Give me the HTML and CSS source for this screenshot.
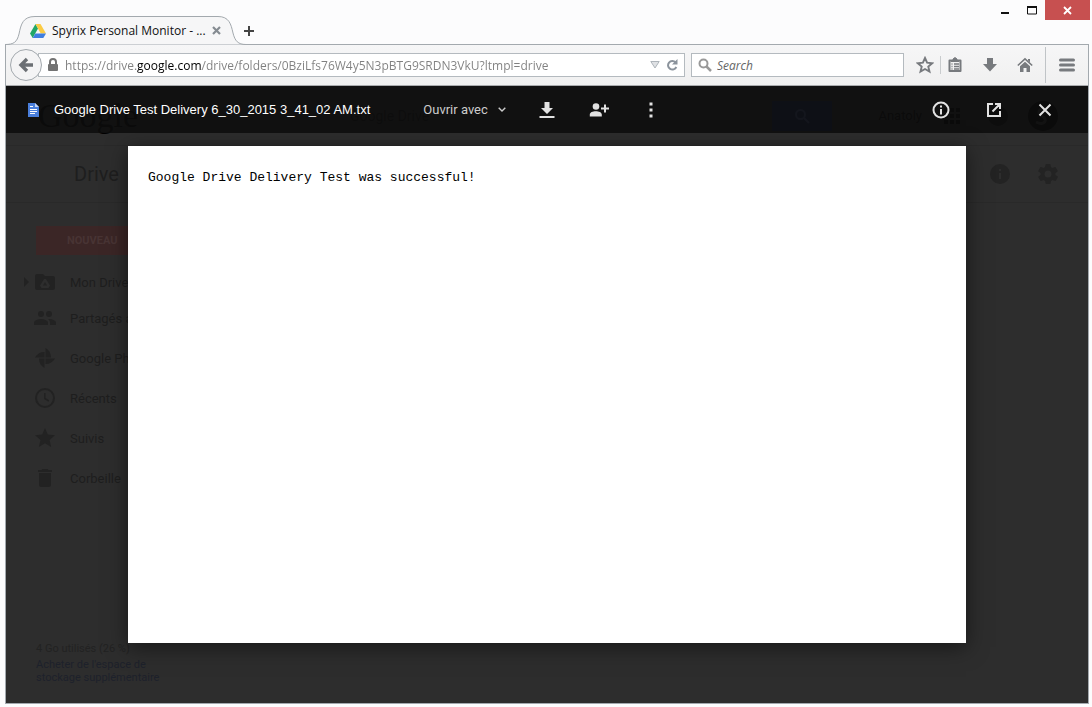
FILE: index.html
```html
<!DOCTYPE html>
<html lang="fr">
<head>
    <meta charset="UTF-8">
    <meta name="viewport" content="width=device-width, initial-scale=1.0">
    <title>Spyrix Personal Monitor - Google Drive</title>
    <link rel="stylesheet" href="styles.css">
</head>
<body>
    <div class="titlebar">
        <div class="tab">
            <svg class="tab-shape" viewBox="0 0 241 29" preserveAspectRatio="none"><path d="M0 28.500C9 28.500 12 26 14 18C16 8 18 .5 30 .5H213C224 .5 226 8 228 17C230 25 233 28.500 241 28.500" fill="#f6f6f7" stroke="#a3a9ae"/></svg>
            <svg class="tab-icon" width="16" height="16" viewBox="0 0 16 16"><path d="M5.500 1L0 10.500 2.700 15 8 5.500z" fill="#21a767"/><path d="M5.500 1h5L16 10.500h-5.300z" fill="#fbcb44"/><path d="M5.300 10.500H16L13.300 15H2.700z" fill="#3f7ee0"/></svg>
            <span class="tab-title">Spyrix Personal Monitor - ...</span>
            <button class="plain" aria-label="Close tab"><svg width="9" height="9" viewBox="0 0 9 9"><path d="M1 1l7 7M8 1L1 8" stroke="#858b91" stroke-width="2.200"/></svg></button>
        </div>
        <button class="plain new-tab" aria-label="New tab"><svg width="12" height="12" viewBox="0 0 12 12"><path d="M6 1v10M1 6h10" stroke="#444" stroke-width="2"/></svg></button>
        <div class="window-buttons">
            <button class="plain" aria-label="Minimize"><svg width="10" height="10" viewBox="0 0 10 10"><path d="M1 8h8" stroke="#111" stroke-width="2"/></svg></button>
            <button class="plain" aria-label="Maximize"><svg width="10" height="10" viewBox="0 0 10 10"><path d="M.5 1v8h9V1" fill="none" stroke="#111"/><path d="M0 2h10" stroke="#111" stroke-width="2"/></svg></button>
            <button class="plain close-window" aria-label="Close"><svg width="9" height="9" viewBox="0 0 9 9"><path d="M1 1l7 7M8 1l-7 7" stroke="#fff" stroke-width="1.800"/></svg></button>
        </div>
    </div>

    <div class="window">
        <div class="navbar">
            <button class="back" aria-label="Back"><svg width="16" height="16" viewBox="0 0 16 16"><path d="M9 2L3 8l6 6M3 8h12" fill="none" stroke="#6b6f74" stroke-width="3.400"/></svg></button>
            <div class="urlbar">
                <svg width="12" height="14" viewBox="0 0 12 14"><path d="M3 7V4a3 3 0 0 1 6 0v3" fill="none" stroke="#737373" stroke-width="2"/><rect x="1" y="6" width="10" height="7" rx="1" fill="#737373"/></svg>
                <input class="url" type="text" aria-label="Address" value="https://drive.google.com/drive/folders/0BziLfs76W4y5N3pBTG9SRDN3VkU?ltmpl=drive">
                <button class="plain" aria-label="History"><svg width="10" height="8" viewBox="0 0 10 8"><path d="M.8.5h8.400L5 7z" fill="#dfe1e4" stroke="#aeb4ba"/></svg></button>
                <button class="plain" aria-label="Reload"><svg width="12" height="12" viewBox="0 0 12 12"><path d="M9.500 3.300A4.300 4.300 0 1 0 10.300 8" fill="none" stroke="#8b939c" stroke-width="2"/><path d="M11.500 0v5.500H6z" fill="#8b939c"/></svg></button>
            </div>
            <div class="searchbar">
                <svg width="14" height="14" viewBox="0 0 14 14"><circle cx="5.500" cy="5.500" r="4" fill="none" stroke="#999" stroke-width="2"/><path d="M8.500 8.500L13 13" stroke="#999" stroke-width="2.500"/></svg>
                <input class="search" type="text" aria-label="Search" placeholder="Search">
            </div>
            <div class="nav-icons">
                <button class="plain bookmark" aria-label="Bookmark"><svg width="18" height="18" viewBox="0 0 18 18"><path d="M9 2l2.100 4.700 5.100.5-3.900 3.400 1.200 5L9 13l-4.500 2.600 1.200-5L1.800 7.200l5.100-.5z" fill="none" stroke="#777a7e" stroke-width="1.900"/></svg></button>
                <button class="plain" aria-label="Bookmarks list"><svg width="16" height="16" viewBox="0 0 16 16"><path d="M2.500 3.500h11v10.500h-11z" fill="#f2f2f3" stroke="#777a7e" stroke-width="2" stroke-linejoin="round"/><path d="M8 .5l2 1.500v2H6V2zM4 4.500h8" fill="#777a7e" stroke="#777a7e"/><path d="M4.500 7h1M7 7h5M4.500 9.500h1M7 9.500h5M4.500 12h1M7 12h5" stroke="#777a7e" stroke-width="1.300"/></svg></button>
                <button class="plain" aria-label="Downloads"><svg width="16" height="16" viewBox="0 0 16 16"><path d="M5 1h6v6h4l-7 7.500L1 7h4z" fill="#777a7e"/></svg></button>
                <button class="plain" aria-label="Home"><svg width="16" height="16" viewBox="0 0 16 16"><path d="M.8 8.500L8 1.800l7.200 6.700" fill="none" stroke="#777a7e" stroke-width="1.600"/><path d="M3 9.200l5-4.500 5 4.500V15H9.500v-4h-3v4H3zM11 2h2v3.500l-2-2z" fill="#777a7e"/></svg></button>
            </div>
            <button class="plain menu" aria-label="Menu"><svg width="16" height="14" viewBox="0 0 16 14"><path d="M1.500 2h13M1.500 7h13M1.500 12h13" stroke="#777a7e" stroke-width="3" stroke-linecap="round"/></svg></button>
        </div>

        <div class="content">
            <!-- dimmed Drive page behind the viewer -->
            <div class="google-bar">
                <span class="google-logo">Google</span>
                <span class="search-hint">Google Drive</span>
                <span class="google-search"><svg width="16" height="16" viewBox="0 0 16 16"><circle cx="6.500" cy="6.500" r="4.500" fill="none" stroke="#3c4a78" stroke-width="2"/><path d="M10 10l5 5" stroke="#3c4a78" stroke-width="2"/></svg></span>
                <span class="user">Anatoly</span>
                <svg class="apps" width="16" height="16" viewBox="0 0 16 16"><path d="M0 2h4m2 0h4m2 0h4M0 8h4m2 0h4m2 0h4M0 14h4m2 0h4m2 0h4" stroke="#000" stroke-width="4"/></svg>
                <svg class="bell" width="20" height="20" viewBox="0 0 20 20"><circle cx="10" cy="10" r="10" fill="#0e0e0e"/></svg>
                <svg class="avatar" width="30" height="30" viewBox="0 0 30 30"><circle cx="15" cy="15" r="15" fill="#000"/><path d="M20 9c-7-4-13 2-6 6s2 10-6 6" fill="none" stroke="#333" stroke-width="3"/></svg>
            </div>
            <div class="drive-bar">
                <span class="drive-title">Drive</span>
                <svg width="24" height="24" viewBox="0 0 24 24"><path d="M12 2a10 10 0 1 0 0 20 10 10 0 0 0 0-20zm1 15h-2v-6h2zm0-8h-2V7h2z" fill="#232323"/></svg>
                <svg width="24" height="24" viewBox="0 0 24 24"><path d="M19.400 13a7.500 7.500 0 0 0 0-2l2.100-1.600a.5.5 0 0 0 .1-.7l-2-3.400a.5.5 0 0 0-.6-.2l-2.500 1a7.300 7.300 0 0 0-1.700-1L14.500 2.400a.5.5 0 0 0-.5-.4h-4a.5.5 0 0 0-.5.4L9.100 5.100a7.700 7.700 0 0 0-1.700 1l-2.500-1a.5.5 0 0 0-.6.2l-2 3.400a.5.5 0 0 0 .1.700L4.600 11a8 8 0 0 0 0 2l-2.100 1.600a.5.5 0 0 0-.1.700l2 3.400c.1.200.4.300.6.200l2.500-1a7.300 7.300 0 0 0 1.700 1l.4 2.700c0 .2.200.4.500.4h4c.2 0 .5-.2.500-.4l.4-2.700a7.700 7.700 0 0 0 1.700-1l2.500 1c.2.100.5 0 .6-.2l2-3.400a.5.500 0 0 0-.1-.7zM12 15.500a3.500 3.500 0 1 1 0-7 3.500 3.500 0 0 1 0 7z" fill="#232323"/></svg>
            </div>
            <div class="sidebar">
                <button class="new-button">NOUVEAU</button>
                <ul class="folders">
                    <li class="my-drive"><svg width="5" height="10" viewBox="0 0 5 10"><path d="M0 0l5 5-5 5z" fill="#222"/></svg><svg width="24" height="24" viewBox="0 0 24 24"><path fill-rule="evenodd" d="M20 6h-8l-2-2H4a2 2 0 0 0-2 2v12c0 1.100.9 2 2 2h16a2 2 0 0 0 2-2V8a2 2 0 0 0-2-2zm-7 3l4 6.500-1.500 2.500h-7L7 15.500 11 9zm-1 3l-2 3.500h4z" fill="#222"/></svg>Mon Drive</li>
                    <li><svg width="24" height="24" viewBox="0 0 24 24"><path d="M16 11a3 3 0 1 0 0-6 3 3 0 0 0 0 6zm-8 0a3 3 0 1 0 0-6 3 3 0 0 0 0 6zm0 2c-2.300 0-7 1.200-7 3.500V19h14v-2.500C15 14.200 10.300 13 8 13zm8 0h-1c1.200.9 2 2 2 3.500V19h6v-2.500c0-2.300-4.700-3.500-7-3.500z" fill="#222"/></svg>Partagés avec moi</li>
                    <li><svg width="24" height="24" viewBox="0 0 24 24"><path d="M12.500 2v9.500H18C18 7 16 4 12.500 2zM22 12.500h-9.500V18c4.500 0 7.500-2 9.500-5.500zM11.500 22v-9.500H6c0 4.500 2 7.500 5.500 9.500zM2 11.500h9.500V6C7 6 4 8 2 11.500z" fill="#222"/></svg>Google Photos</li>
                    <li><svg width="24" height="24" viewBox="0 0 24 24"><circle cx="12" cy="12" r="9" fill="none" stroke="#222" stroke-width="2"/><path d="M11.800 7v5.500l4 2.500" fill="none" stroke="#222" stroke-width="1.500"/></svg>Récents</li>
                    <li><svg width="24" height="24" viewBox="0 0 24 24"><path d="M12 17.300l6.200 3.700-1.600-7L22 9.200l-7.200-.6L12 2 9.200 8.600 2 9.200 7.500 14l-1.700 7z" fill="#222"/></svg>Suivis</li>
                    <li><svg width="24" height="24" viewBox="0 0 24 24"><path d="M6 19c0 1.100.9 2 2 2h8a2 2 0 0 0 2-2V7H6zM19 4h-3.500l-1-1h-5l-1 1H5v2h14z" fill="#222"/></svg>Corbeille</li>
                </ul>
                <div class="storage">
                    <span>4 Go utilisés (26 %)</span>
                    <a href="#">Acheter de l'espace de stockage supplémentaire</a>
                </div>
            </div>

            <div class="viewer">
                <div class="viewer-bar">
                    <svg class="file-icon" width="11" height="14" viewBox="0 0 11 14"><path d="M0 0h7l4 4v10H0z" fill="#4a7fdc"/><path d="M7 0l4 4H7z" fill="#c3d6f7"/><path d="M2 3.500h3M2 6.500h7M2 8.500h7M2 10.500h5" stroke="#fff"/></svg>
                    <span class="file-name">Google Drive Test Delivery 6_30_2015 3_41_02 AM.txt</span>
                    <button class="plain open-with">Ouvrir avec <svg width="8" height="5" viewBox="0 0 8 5"><path d="M.7.700L4 4 7.300.700" fill="none" stroke="#ccc" stroke-width="1.400"/></svg></button>
                    <div class="file-actions">
                        <button class="plain" aria-label="Télécharger"><svg width="16" height="18" viewBox="0 0 16 18"><path d="M5.500 1h5v6H14l-6 6-6-6h3.500zM.5 15h15v2H.5z" fill="#e2e2e2"/></svg></button>
                        <button class="plain" aria-label="Partager"><svg width="20" height="16" viewBox="0 0 20 16"><circle cx="7" cy="4.500" r="3.300" fill="#e2e2e2"/><path d="M.8 14.500v-2c0-4.500 12-4.500 12 0v2zM15 2.500h2v3h3v2h-3v3h-2v-3h-3v-2h3z" fill="#e2e2e2"/></svg></button>
                        <button class="plain" aria-label="Plus d'actions"><svg width="4" height="16" viewBox="0 0 4 16"><path d="M.5.500h3v3h-3zM.5 6.500h3v3h-3zM.5 12.500h3v3h-3z" fill="#e2e2e2"/></svg></button>
                    </div>
                    <div class="viewer-actions">
                        <button class="plain" aria-label="Détails"><svg width="18" height="18" viewBox="0 0 18 18"><circle cx="9" cy="9" r="7.500" fill="none" stroke="#e2e2e2" stroke-width="2"/><path d="M9 4.500v2M9 8v5.500" stroke="#e2e2e2" stroke-width="2"/></svg></button>
                        <button class="plain" aria-label="Nouvelle fenêtre"><svg width="16" height="16" viewBox="0 0 16 16"><path d="M7 2H2v12h12V9M9 2h5v5M14 2L6.500 9.500" fill="none" stroke="#e2e2e2" stroke-width="2"/></svg></button>
                        <button class="plain" aria-label="Fermer"><svg width="14" height="14" viewBox="0 0 14 14"><path d="M1.500 1.500l11 11M12.500 1.500l-11 11" stroke="#e2e2e2" stroke-width="2"/></svg></button>
                    </div>
                </div>
                <pre class="paper">Google Drive Delivery Test was successful!</pre>
            </div>
        </div>
    </div>
</body>
</html>
```

FILE: styles.css
```css
* { box-sizing: border-box; }
body { margin: 0; min-height: 100vh; padding-bottom: 3px; display: flex; flex-direction: column; background: #fcfcfd; font-family: "Open Sans", "Noto Sans", sans-serif; font-size: 12px; color: #111; }
svg { display: block; flex: none; }
input { min-width: 0; flex: 1; padding: 0; border: none; outline: none; background: none; font: inherit; }
.plain { display: flex; align-items: center; justify-content: center; padding: 0; border: none; background: none; font: inherit; color: inherit; }

/* title bar */
.titlebar { display: flex; height: 44px; padding: 0 2px 0 5px; }
.tab { position: relative; z-index: 1; display: flex; align-items: center; width: 241px; height: 29px; margin-top: 16px; padding: 0 25px; }
.tab-shape { position: absolute; left: 0; top: 0; width: 100%; height: 100%; }
.tab-icon, .tab-title, .tab .plain { position: relative; }
.tab-title { flex: 1; margin-left: 6px; white-space: nowrap; }
.new-tab { height: 28px; margin-top: 17px; margin-left: -3px; }
.window-buttons { display: flex; height: 20px; margin-left: auto; }
.window-buttons .plain { width: 27px; }
.window-buttons .close-window { width: 45px; background: #c75050; }

/* browser window */
.window { flex: 1; display: flex; flex-direction: column; margin: 0 3px 0 5px; border: 1px solid #a3a9ae; }
.navbar { display: flex; align-items: center; height: 41px; padding-left: 4px; border-bottom: 1px solid #a9abad; background: linear-gradient(#f6f6f7, #f0f0f0); }
.back { z-index: 1; display: flex; align-items: center; justify-content: center; width: 32px; height: 32px; padding: 0; border: 1px solid #a3a9ae; border-radius: 50%; background: #f4f4f5; }
.urlbar, .searchbar { display: flex; align-items: center; height: 24px; border: 1px solid #b4babf; background: #fff; }
.urlbar { flex: 1; gap: 6px; margin-left: -4px; padding: 0 6px 0 8px; }
.url { color: transparent; background: linear-gradient(90deg, #808080 72px, #000 72px, #000 137px, #808080 137px); -webkit-background-clip: text; background-clip: text; }
.searchbar { width: 213px; gap: 5px; margin-left: 6px; padding: 0 6px; }
.search::placeholder { color: #666; font-style: italic; opacity: 1; }
.nav-icons { display: flex; align-items: center; gap: 19px; margin-left: 12px; }
.bookmark { width: 25px; margin-right: -13px; padding-right: 6px; border-right: 1px solid #c9ccce; }
.menu { width: 43px; height: 36px; margin-left: 12px; border-left: 1px solid #c0c4c7; }

/* Drive page, dimmed */
.content { position: relative; flex: 1; display: flex; flex-direction: column; background: #2d2d2d; color: #1e1e1e; font-family: Roboto, sans-serif; font-size: 13px; }
.google-bar { display: flex; align-items: center; height: 60px; padding: 0 30px 0 32px; color: #000; border-bottom: 1px solid #292929; }
.google-logo { width: 312px; font: 34px "Liberation Serif", serif; }
.search-hint { color: #111; font-size: 14px; }
.google-search { display: flex; align-items: center; justify-content: center; width: 60px; height: 30px; margin-left: auto; background: #14244c; }
.user { margin-left: 46px; }
.apps { margin-left: 22px; }
.bell { margin-left: 28px; }
.avatar { margin-left: 20px; }
.drive-bar { display: flex; align-items: center; gap: 24px; height: 57px; padding: 0 28px 0 68px; border-bottom: 1px solid #292929; }
.drive-title { flex: 1; font-size: 20px; }
.sidebar { flex: 1; display: flex; flex-direction: column; width: 240px; padding: 23px 0 19px 30px; }
.new-button { height: 29px; padding: 0 0 0 31px; border: none; background: #3b2626; color: #483434; font: bold 11px Roboto, sans-serif; text-align: left; }
.folders { margin: 11px 0 0; padding: 0; list-style: none; }
.folders li { display: flex; align-items: center; gap: 13px; height: 40px; margin-left: -3px; }
.folders .my-drive { height: 32px; margin-left: -12px; gap: 4px; }
.folders .my-drive svg + svg { margin-right: 9px; }
.storage { margin-top: auto; width: 140px; font-size: 11px; line-height: 13px; color: #222; }
.storage span { display: block; margin-bottom: 3px; }
.storage a { display: block; color: #1d212b; text-decoration: none; }

/* file viewer */
.viewer { position: absolute; inset: 0; display: flex; flex-direction: column; }
.viewer-bar { display: flex; align-items: center; height: 47px; padding: 0 36px 0 22px; background: rgba(13, 13, 13, 0.85); color: #fff; font-family: "Liberation Sans", Arial, sans-serif; }
.file-name { margin-left: 15px; white-space: nowrap; }
.open-with { gap: 10px; margin-left: 53px; color: #ccc; font-family: Roboto, sans-serif; white-space: nowrap; }
.file-actions, .viewer-actions { display: flex; align-items: center; }
.file-actions { gap: 12px; margin-left: 21px; }
.file-actions .plain { width: 40px; height: 32px; }
.viewer-actions { gap: 36px; margin-left: auto; }
.paper { flex: 1; margin: 13px 122px 60px; padding: 24px 20px; background: #fff; color: #000; box-shadow: 0 4px 20px rgba(0, 0, 0, 0.5); font: 13px "Liberation Mono", "Courier New", monospace; }
```
